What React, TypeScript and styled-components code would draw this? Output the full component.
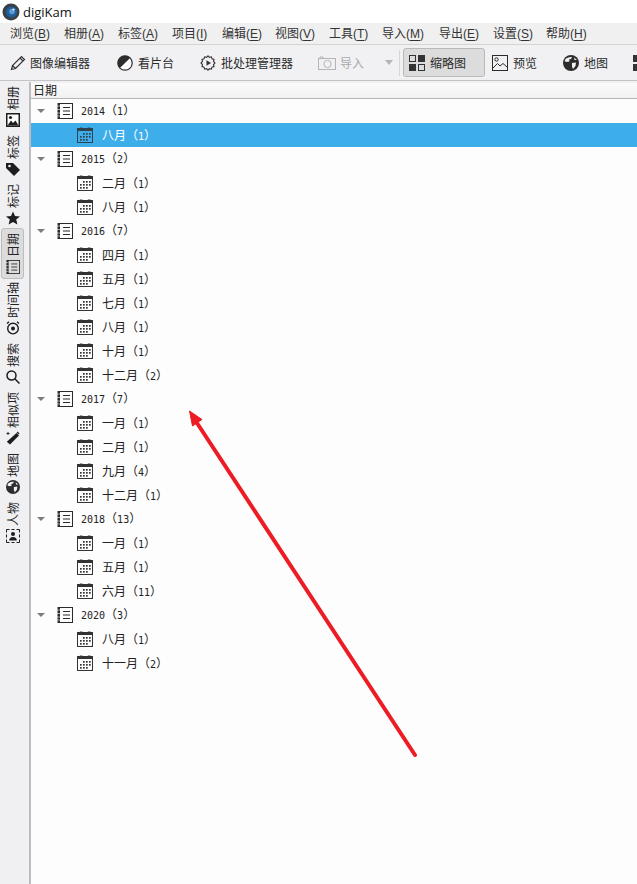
import React from "react";
import styled, { createGlobalStyle } from "styled-components";

const cjk = `"Noto Sans CJK SC", "Noto Sans", sans-serif`;

const Global = createGlobalStyle`
  html, body { margin: 0; padding: 0; background: #fff; }
  body { font-family: ${cjk}; font-size: 12px; color: #222; }
`;

const Page = styled.div`
  position: relative;
  width: 637px;
  height: 884px;
  overflow: hidden;
  display: flex;
  flex-direction: column;
  background: #f0f0f0;
`;

const TitleBar = styled.div`
  height: 23px;
  background: #fff;
  display: flex;
  align-items: center;
  padding-left: 2px;
  gap: 3px;
  flex: none;
`;
const TitleText = styled.span`
  font-family: "Open Sans", "Noto Sans", sans-serif;
  font-size: 13px;
  color: #111;
`;

const MenuBar = styled.div`
  height: 21px;
  background: #f0f0f0;
  border-bottom: 1px solid #d4d4d4;
  display: flex;
  align-items: center;
  padding-left: 10px;
  flex: none;
`;
const MenuItem = styled.span<{ $w: number }>`
  width: ${(p) => p.$w}px;
  flex: none;
  font-size: 12px;
  line-height: 21px;
  padding-top: 1px;
  color: #333;
  white-space: nowrap;
  font-family: "Liberation Sans", ${cjk};
`;
const Key = styled.span`
  text-decoration: underline;
  text-underline-offset: 2px;
`;

const ToolBar = styled.div`
  height: 35px;
  background: #f1f1f3;
  display: flex;
  align-items: center;
  flex: none;
  white-space: nowrap;
  overflow: hidden;
`;
const Tool = styled.div<{ $w: number; $ml?: number; $gap?: number; $active?: boolean; $off?: boolean }>`
  width: ${(p) => p.$w}px;
  margin-left: ${(p) => p.$ml ?? 0}px;
  height: 29px;
  flex: none;
  box-sizing: border-box;
  display: flex;
  align-items: center;
  gap: ${(p) => p.$gap ?? 5}px;
  padding-left: ${(p) => (p.$active ? 5 : 6)}px;
  font-size: 12px;
  color: ${(p) => (p.$off ? "#a9a9a9" : "#2b2b2b")};
  border-radius: 3px;
  border: 1px solid ${(p) => (p.$active ? "#b9b9b9" : "transparent")};
  background: ${(p) => (p.$active ? "#dcdcdc" : "transparent")};
`;
const ToolSep = styled.div`
  width: 1px;
  height: 26px;
  margin-left: 6px;
  margin-right: 3px;
  background: #d6d6d6;
  flex: none;
`;
const DropCaret = styled.div`
  flex: none;
  margin-left: 7px;
  width: 0;
  height: 0;
  border-left: 4px solid transparent;
  border-right: 4px solid transparent;
  border-top: 5px solid #b4b4b4;
`;

const Body = styled.div`
  flex: 1;
  display: flex;
  min-height: 0;
  border-top: 1px solid #c4c4c4;
  padding-top: 2px;
  background: #f0f0f3;
`;
const Side = styled.div`
  width: 31px;
  flex: none;
  display: flex;
  flex-direction: column;
  align-items: center;
  box-sizing: border-box;
  border-right: 2px solid #bdbdc0;
  padding-left: 1px;
  padding-right: 5px;
  margin-top: -1px;
`;
const Tab = styled.div<{ $active?: boolean }>`
  width: 23px;
  flex: none;
  box-sizing: border-box;
  display: flex;
  flex-direction: column;
  align-items: center;
  justify-content: flex-end;
  gap: 3px;
  padding: 4px 0;
  border-radius: 3px;
  border: ${(p) => (p.$active ? "1px solid #bdbdbd" : "0")};
  margin: ${(p) => (p.$active ? "-1px 0" : "0")};
  background: ${(p) => (p.$active ? "#dcdcdc" : "transparent")};
  color: #222;
`;
const TabText = styled.span`
  writing-mode: vertical-rl;
  text-orientation: sideways;
  transform: rotate(180deg);
  font-size: 12px;
  line-height: 14px;
  white-space: nowrap;
`;

const Main = styled.div`
  flex: 1;
  display: flex;
  flex-direction: column;
  background: #fdfdfd;
  min-width: 0;
`;
const Header = styled.div`
  height: 15px;
  flex: none;
  background: linear-gradient(#fbfbfb, #f1f1f1);
  border-bottom: 1px solid #b4b4b4;
  padding-left: 2px;
  font-size: 12px;
  line-height: 14px;
  color: #222;
`;
const Row = styled.div<{ $sel?: boolean; $month?: boolean }>`
  height: 24px;
  flex: none;
  display: flex;
  align-items: center;
  padding-left: ${(p) => (p.$month ? 46 : 5)}px;
  background: ${(p) => (p.$sel ? "#3daee9" : "transparent")};
  color: ${(p) => (p.$sel ? "#fff" : "#222")};
  font-size: 12px;
  white-space: nowrap;
`;
const Caret = styled.div`
  width: 0;
  height: 0;
  border-left: 4px solid transparent;
  border-right: 4px solid transparent;
  border-top: 4px solid #7d7d7d;
  margin-right: 12px;
  margin-top: -1px;
  margin-left: 1px;
  flex: none;
`;
const RowLabel = styled.span`
  margin-left: 8px;
  line-height: 24px;
`;
const MonthLabel = styled(RowLabel)`
  margin-left: 9px;
  padding-top: 1px;
`;
const Digits = styled.span`
  font-family: "DejaVu Sans Mono", monospace;
  font-size: 10px;
`;
const Overlay = styled.svg`
  position: absolute;
  left: 0;
  top: 0;
  pointer-events: none;
`;
const Ic = styled.svg`
  flex: none;
  display: block;
`;

const Logo = () => (
  <Ic width="18" height="18" viewBox="0 0 18 18">
    <circle cx="9" cy="9" r="8.5" fill="#3b3f46" />
    <circle cx="9.5" cy="9" r="5.5" fill="#1f5f9e" />
    <circle cx="10" cy="8.5" r="2.8" fill="#5f9bd3" />
    <circle cx="11.5" cy="6.5" r="1.1" fill="#e3effa" />
  </Ic>
);
const Pencil = () => (
  <Ic width="16" height="16" viewBox="0 0 16 16" fill="none" stroke="#333" strokeWidth="1.2">
    <path d="M1.5 14.5 L2.5 10.5 L11.5 1.5 L14.5 4.5 L5.5 13.5 Z M10 3 L13 6 M2.5 10.5 L5.5 13.5" />
  </Ic>
);
const Contrast = () => (
  <Ic width="16" height="16" viewBox="0 0 16 16">
    <circle cx="8" cy="8" r="7.2" fill="#fff" stroke="#2d2d2d" strokeWidth="1.2" />
    <path d="M13.1 2.9 A7.2 7.2 0 0 0 2.9 13.1 Z" fill="#2d2d2d" />
  </Ic>
);
const Batch = () => (
  <Ic width="16" height="16" viewBox="0 0 16 16" fill="none" stroke="#333" strokeWidth="1.1">
    <path d="M8 .8 l1.4 1.5 2-.5 .6 2 2 .6 -.5 2 1.5 1.6 -1.5 1.6 .5 2 -2 .6 -.6 2 -2 -.5 L8 15.2 l-1.4-1.5 -2 .5 -.6-2 -2-.6 .5-2 L1 8 l1.5-1.6 -.5-2 2-.6 .6-2 2 .5 Z" />
    <path d="M6.5 5.2 L11 8 L6.5 10.8 Z" fill="#333" stroke="none" />
  </Ic>
);
const Camera = () => (
  <Ic width="18" height="14" viewBox="0 0 18 14" fill="none" stroke="#b5b5b5" strokeWidth="1">
    <rect x=".5" y="2.5" width="17" height="11" />
    <circle cx="9.5" cy="8" r="3.6" />
    <path d="M2 2.5 V1 H5 V2.5" />
  </Ic>
);
const Thumbs = () => (
  <Ic width="16" height="16" viewBox="0 0 16 16">
    <rect x=".5" y=".5" width="6" height="6" fill="none" stroke="#333" />
    <rect x="9" y="0" width="7" height="7" fill="#333" />
    <rect x="0" y="9" width="7" height="7" fill="#333" />
    <rect x="9.5" y="9.5" width="6" height="6" fill="none" stroke="#333" />
  </Ic>
);
const SplitBlocks = () => (
  <Ic width="16" height="16" viewBox="0 0 16 16">
    <rect x="0" y="0" width="7" height="7" fill="#333" />
    <rect x="0" y="9" width="7" height="7" fill="#333" />
  </Ic>
);
const Picture = () => (
  <Ic width="16" height="16" viewBox="0 0 16 16" fill="none" stroke="#2b2b2b" strokeWidth="1">
    <rect x=".5" y=".5" width="15" height="15" />
    <circle cx="4.5" cy="4.5" r="1.7" />
    <path d="M1 13 L5.5 8.5 L8 11 L11 8.5 L15 12" />
  </Ic>
);
const PictureSolid = () => (
  <Ic width="14" height="14" viewBox="0 0 14 14">
    <rect x=".75" y=".75" width="12.5" height="12.5" fill="#fff" stroke="#1d1d1d" strokeWidth="1.5" />
    <circle cx="4.5" cy="4.5" r="1.6" fill="#1d1d1d" />
    <path d="M1.5 12.5 L5 7.5 L7 10 L9.5 7.5 L12.5 12.5 Z" fill="#1d1d1d" />
  </Ic>
);
const Globe = ({ s = 16 }: { s?: number }) => (
  <Ic width={s} height={s} viewBox="0 0 16 16">
    <circle cx="8" cy="8" r="8" fill="#2d2d2d" />
    <path d="M3 3.5 Q6 1.5 9 2 L8 4 L6 4.5 L6.5 6.5 L3.5 7 L1.6 6 Q2 4.5 3 3.5 Z M9 8 L13 7.5 L12.5 11 L10 14 L9 11.5 Z M11 2.5 L14 5 L11.5 5 Z" fill="#f1f1f3" />
  </Ic>
);
const Tag = () => (
  <Ic width="14" height="14" viewBox="0 0 14 14">
    <path d="M0 1 H7 L14 8 L8 14 L0 6 Z" fill="#1d1d1d" />
    <circle cx="3.5" cy="4" r="1.3" fill="#f0f0f3" />
  </Ic>
);
const Star = () => (
  <Ic width="14" height="14" viewBox="0 0 14 14">
    <path d="M7 .5 L9 5 L14 5.4 L10.2 8.6 L11.4 13.5 L7 10.9 L2.6 13.5 L3.8 8.6 L0 5.4 L5 5 Z" fill="#1d1d1d" />
  </Ic>
);
const Notebook = ({ s = 14 }: { s?: number }) => (
  <Ic width={s + 2} height={s + 2} viewBox="0 0 16 16" fill="none" stroke="#2b2b2b">
    <rect x="2.5" y=".5" width="13" height="15" />
    <rect x=".5" y="0" width="2" height="16" fill="#2b2b2b" stroke="none" />
    <path d="M6 4.5 H13 M6 8 H13 M6 11.5 H13" />
    <path d="M0 3 H3 M0 6.5 H3 M0 10 H3 M0 13 H3" stroke="#fff" strokeWidth=".6" />
  </Ic>
);
const Clock = () => (
  <Ic width="14" height="14" viewBox="0 0 14 14" fill="none" stroke="#1d1d1d">
    <circle cx="7" cy="7.6" r="5.3" strokeWidth="1.4" />
    <circle cx="7" cy="7.6" r="2" fill="#1d1d1d" stroke="none" />
    <path d="M1 2.6 L3 .8 M13 2.6 L11 .8" strokeWidth="1.3" />
  </Ic>
);
const Search = () => (
  <Ic width="14" height="14" viewBox="0 0 14 14" fill="none" stroke="#1d1d1d" strokeWidth="1.5">
    <circle cx="5.5" cy="5.5" r="4.5" />
    <path d="M8.8 8.8 L13.5 13.5" />
  </Ic>
);
const Wand = () => (
  <Ic width="14" height="14" viewBox="0 0 14 14">
    <path d="M10.5 2 L13 4.5 L4 13.5 L.8 10.8 Z" fill="#1d1d1d" />
    <path d="M11.5 .5 L13.5 2.5 L12.8 3.5 L10.6 1.4 Z" fill="#1d1d1d" />
    <path d="M2 1 V4 M.5 2.5 H3.5" stroke="#1d1d1d" strokeWidth=".9" />
  </Ic>
);
const Person = () => (
  <Ic width="14" height="14" viewBox="0 0 14 14" fill="none" stroke="#1d1d1d">
    <path d="M.5 3.5 V.5 H3.5 M10.5 .5 H13.5 V3.5 M13.5 10.5 V13.5 H10.5 M3.5 13.5 H.5 V10.5 M5.5 .5 H8.5 M5.5 13.5 H8.5 M.5 5.5 V8.5 M13.5 5.5 V8.5" />
    <circle cx="7" cy="5" r="2" fill="#1d1d1d" stroke="none" />
    <path d="M3.2 11.5 Q3.4 8 7 8 Q10.6 8 10.8 11.5 Z" fill="#1d1d1d" stroke="none" />
  </Ic>
);
const Calendar = ({ sel }: { sel?: boolean }) => {
  const c = sel ? "#31424f" : "#333";
  const dots: [number, number][] = [
    [6, 6], [9, 6], [12, 6],
    [3, 9], [6, 9], [9, 9], [12, 9],
    [3, 12], [6, 12], [9, 12],
  ];
  return (
    <Ic width="16" height="16" viewBox="0 0 16 16">
      <rect x=".5" y="1.5" width="15" height="14" fill="none" stroke={c} />
      <rect x="1" y="2" width="14" height="2" fill={c} />
      <path d="M2 2 Q2 .5 3.5 .5 H5 Q6 .5 6 2 Z M10 2 Q10 .5 11.5 .5 H13 Q14 .5 14 2 Z" fill={c} />
      {dots.map(([x, y]) => (
        <rect key={`${x}-${y}`} x={x} y={y} width="1.7" height="1.7" fill={c} />
      ))}
    </Ic>
  );
};

type M = { t: string; n: number; sel?: boolean };
const tree: { y: number; n: number; months: M[] }[] = [
  { y: 2014, n: 1, months: [{ t: "八月", n: 1, sel: true }] },
  { y: 2015, n: 2, months: [{ t: "二月", n: 1 }, { t: "八月", n: 1 }] },
  {
    y: 2016, n: 7,
    months: [
      { t: "四月", n: 1 }, { t: "五月", n: 1 }, { t: "七月", n: 1 },
      { t: "八月", n: 1 }, { t: "十月", n: 1 }, { t: "十二月", n: 2 },
    ],
  },
  {
    y: 2017, n: 7,
    months: [{ t: "一月", n: 1 }, { t: "二月", n: 1 }, { t: "九月", n: 4 }, { t: "十二月", n: 1 }],
  },
  { y: 2018, n: 13, months: [{ t: "一月", n: 1 }, { t: "五月", n: 1 }, { t: "六月", n: 11 }] },
  { y: 2020, n: 3, months: [{ t: "八月", n: 1 }, { t: "十一月", n: 2 }] },
];

const menus: [string, string, number][] = [
  ["浏览", "B", 54], ["相册", "A", 54], ["标签", "A", 54], ["项目", "I", 50],
  ["编辑", "E", 53], ["视图", "V", 54], ["工具", "T", 53], ["导入", "M", 57],
  ["导出", "E", 54], ["设置", "S", 53], ["帮助", "H", 60],
];

const tabs: { t: string; icon: React.ReactNode; active?: boolean }[] = [
  { t: "相册", icon: <PictureSolid /> },
  { t: "标签", icon: <Tag /> },
  { t: "标记", icon: <Star /> },
  { t: "日期", icon: <Notebook s={12} />, active: true },
  { t: "时间轴", icon: <Clock /> },
  { t: "搜索", icon: <Search /> },
  { t: "相似项", icon: <Wand /> },
  { t: "地图", icon: <Globe s={14} /> },
  { t: "人物", icon: <Person /> },
];

export default function App() {
  return (
    <Page>
      <Global />
      <TitleBar>
        <Logo />
        <TitleText>digiKam</TitleText>
      </TitleBar>
      <MenuBar>
        {menus.map(([t, k, w], i) => (
          <MenuItem key={i} $w={w}>
            {t}(<Key>{k}</Key>)
          </MenuItem>
        ))}
      </MenuBar>
      <ToolBar>
        <Tool $w={107} $ml={3} $gap={4}><Pencil />图像编辑器</Tool>
        <Tool $w={83}><Contrast />看片台</Tool>
        <Tool $w={118}><Batch />批处理管理器</Tool>
        <Tool $w={67} $off $gap={4}><Camera />导入</Tool>
        <DropCaret />
        <ToolSep />
        <Tool $w={82} $active><Thumbs />缩略图</Tool>
        <Tool $w={71}><Picture />预览</Tool>
        <Tool $w={70}><Globe />地图</Tool>
        <Tool $w={30}><SplitBlocks /></Tool>
      </ToolBar>
      <Body>
        <Side>
          {tabs.map((b) => (
            <Tab key={b.t} $active={b.active}>
              <TabText>{b.t}</TabText>
              {b.icon}
            </Tab>
          ))}
        </Side>
        <Main>
          <Header>日期</Header>
          {tree.map((g) => (
            <React.Fragment key={g.y}>
              <Row>
                <Caret />
                <Notebook />
                <RowLabel>
                  <Digits>{g.y}</Digits>（<Digits>{g.n}</Digits>）
                </RowLabel>
              </Row>
              {g.months.map((m, i) => (
                <Row key={i} $month $sel={m.sel}>
                  <Calendar sel={m.sel} />
                  <MonthLabel>
                    {m.t}（<Digits>{m.n}</Digits>）
                  </MonthLabel>
                </Row>
              ))}
            </React.Fragment>
          ))}
        </Main>
      </Body>
      <Overlay width="637" height="884" viewBox="0 0 637 884">
        <path d="M415 755 L197 423" stroke="#ed1c24" strokeWidth="4" strokeLinecap="round" fill="none" />
        <path d="M189.5 411 L202 419.5 L192.5 426 Z" fill="#ed1c24" stroke="#ed1c24" strokeWidth="1" />
      </Overlay>
    </Page>
  );
}
